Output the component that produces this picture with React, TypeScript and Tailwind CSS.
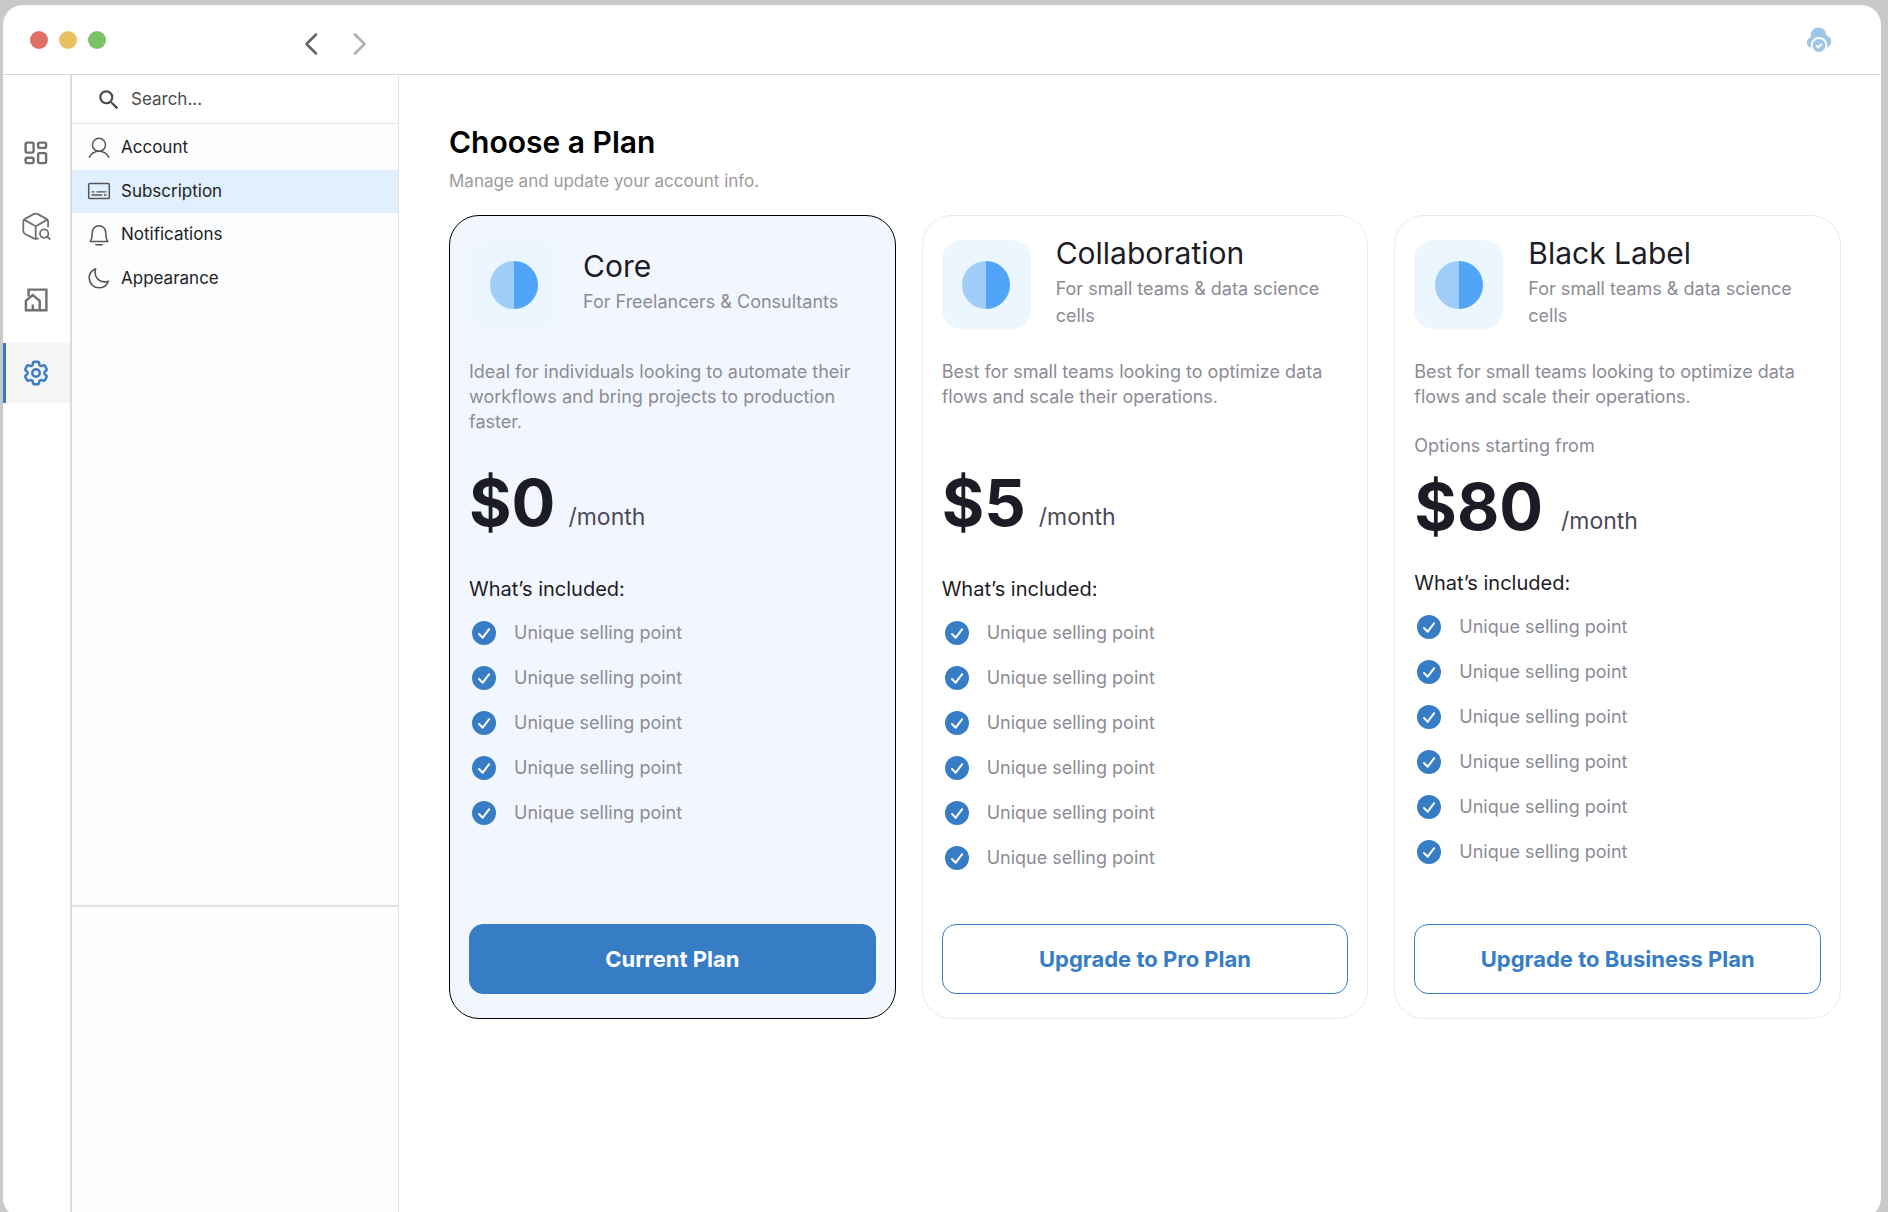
import { useState, type ReactNode } from "react";
import { MdSearch } from "react-icons/md";
import { HiOutlineCog6Tooth } from "react-icons/hi2";

type Plan = {
  name: string;
  audience: string;
  description: string;
  note?: string;
  price: string;
  features: number;
  action: string;
  current?: boolean;
};

const plans: Plan[] = [
  {
    name: "Core",
    audience: "For Freelancers & Consultants",
    description:
      "Ideal for individuals looking to automate their workflows and bring projects to production faster.",
    price: "$0",
    features: 5,
    action: "Current Plan",
    current: true,
  },
  {
    name: "Collaboration",
    audience: "For small teams & data science cells",
    description: "Best for small teams looking to optimize data flows and scale their operations.",
    price: "$5",
    features: 6,
    action: "Upgrade to Pro Plan",
  },
  {
    name: "Black Label",
    audience: "For small teams & data science cells",
    description: "Best for small teams looking to optimize data flows and scale their operations.",
    note: "Options starting from",
    price: "$80",
    features: 6,
    action: "Upgrade to Business Plan",
  },
];

function Chevron({ flip }: { flip?: boolean }) {
  return (
    <svg width="16" height="24" viewBox="0 0 16 24" fill="none" stroke="currentColor" strokeWidth="2.6" strokeLinecap="round" strokeLinejoin="round" aria-hidden="true">
      <path d={flip ? "M3 2.5 12.5 12 3 21.5" : "M13 2.5 3.5 12 13 21.5"} />
    </svg>
  );
}

function CloudCheck() {
  return (
    <svg width="26" height="26" viewBox="0 0 26 26" aria-hidden="true">
      <g fill="#9cc5e8">
        <circle cx="12.5" cy="8.5" r="8" />
        <circle cx="19" cy="14.5" r="6.3" />
        <circle cx="6" cy="15.5" r="5.2" />
      </g>
      <circle cx="13" cy="18.5" r="8.4" fill="#fff" />
      <circle cx="13" cy="18.5" r="6.5" fill="#9cc5e8" />
      <path d="m10.2 18.4 2.1 2.1 3.6-3.6" fill="none" stroke="#fff" strokeWidth="1.8" />
    </svg>
  );
}

function DashboardIcon() {
  return (
    <svg width="28" height="28" viewBox="0 0 28 28" fill="none" stroke="currentColor" strokeWidth="2.4" aria-hidden="true">
      <rect x="3.6" y="3.6" width="8" height="10" rx="1.6" />
      <rect x="16.1" y="3.6" width="8" height="5.3" rx="1.6" />
      <rect x="3.6" y="18.8" width="8" height="5.3" rx="1.6" />
      <rect x="16.1" y="14.1" width="8" height="10" rx="1.6" />
    </svg>
  );
}

function BoxSearchIcon() {
  return (
    <svg width="30" height="30" viewBox="0 0 30 30" fill="none" stroke="currentColor" strokeWidth="1.8" strokeLinecap="round" strokeLinejoin="round" aria-hidden="true">
      <path d="M17 27.3 14.7 28 12.8 27.4 4 23Q2.3 22 2.3 20V10.6Q2.3 8.8 4 7.9L12.6 3.1Q14.7 2 16.8 3.1L25.4 7.9Q27.1 8.8 27.1 10.6V15.4" />
      <path d="m3 8.6 11.7 6.6L26.4 8.6M14.7 15.2V28" />
      <circle cx="23.2" cy="22.6" r="4.2" />
      <path d="m26.2 25.6 2.6 2.4" />
    </svg>
  );
}

function HomeIcon() {
  return (
    <svg width="28" height="28" viewBox="0 0 28 28" fill="none" stroke="currentColor" strokeWidth="2.4" aria-hidden="true">
      <path d="M6.6 10.5V3.6h17.8v20.6H17.6" />
      <path d="M3.9 24.2V14.8l6.9-5.7 6.9 5.7v9.4z" />
      <path d="M10.8 24v-5.5" />
    </svg>
  );
}

function AccountIcon() {
  return (
    <svg width="24" height="24" viewBox="0 0 24 24" fill="none" stroke="currentColor" strokeWidth="1.5" strokeLinecap="round" aria-hidden="true">
      <circle cx="12" cy="8.8" r="6.5" />
      <path d="M2.3 21.2C4.4 17.4 7.8 15.3 12 15.3s7.6 2.1 9.7 5.9" />
    </svg>
  );
}

function SubscriptionIcon() {
  return (
    <svg width="24" height="24" viewBox="0 0 24 24" fill="none" stroke="currentColor" strokeWidth="1.5" aria-hidden="true">
      <rect x="1.7" y="4.6" width="20.6" height="15" rx="1.2" />
      <path d="M4.6 12.8h3M9.5 12.8h10M4.6 16h10.5M16.8 16h2.7" strokeWidth="1.3" />
    </svg>
  );
}

function BellIcon() {
  return (
    <svg width="24" height="24" viewBox="0 0 24 24" fill="none" stroke="currentColor" strokeWidth="1.5" strokeLinejoin="round" strokeLinecap="round" aria-hidden="true">
      <path d="M3.2 18.6q2-2.8 2-8.6C5.2 5.8 8 2.8 12 2.8s6.8 3 6.8 7.2q0 5.8 2 8.6z" />
      <path d="M8.8 21.8h6.4" />
    </svg>
  );
}

function MoonIcon() {
  return (
    <svg width="24" height="24" viewBox="0 0 24 24" fill="none" stroke="currentColor" strokeWidth="1.6" strokeLinejoin="round" aria-hidden="true">
      <path d="M8.7 2.8C4.8 4.3 2.2 7.8 2.2 12c0 5.5 4.3 9.8 9.7 9.8 4.2 0 7.9-2.6 9.5-6.6-1.3.5-2.5.7-3.9.7-5.300 0-9.500-4.200-9.500-9.400 0-1.300.2-2.500.7-3.700z" />
    </svg>
  );
}

function PlanLogo() {
  return (
    <svg width="48" height="48" viewBox="0 0 48 48" aria-hidden="true">
      <path d="M24 0a24 24 0 0 0 0 48z" fill="#9fccf8" />
      <path d="M24 0a24 24 0 0 1 0 48z" fill="#50a5f8" />
    </svg>
  );
}

function CheckBadge() {
  return (
    <svg width="24" height="24" viewBox="0 0 24 24" className="shrink-0" aria-hidden="true">
      <circle cx="12" cy="12" r="12" fill="#367dc6" />
      <path d="m7 13 3.7 3.7L17.2 8.2" fill="none" stroke="#fff" strokeWidth="2" strokeLinecap="round" strokeLinejoin="round" />
    </svg>
  );
}

const railItems: { label: string; icon: ReactNode }[] = [
  { label: "Dashboard", icon: <DashboardIcon /> },
  { label: "Explore", icon: <BoxSearchIcon /> },
  { label: "Home", icon: <HomeIcon /> },
  { label: "Settings", icon: <HiOutlineCog6Tooth size={30} strokeWidth={2} /> },
];

const menuItems: { label: string; icon: ReactNode }[] = [
  { label: "Account", icon: <AccountIcon /> },
  { label: "Subscription", icon: <SubscriptionIcon /> },
  { label: "Notifications", icon: <BellIcon /> },
  { label: "Appearance", icon: <MoonIcon /> },
];

function PlanCard({ plan }: { plan: Plan }) {
  return (
    <article
      className={`flex flex-col rounded-[30px] border px-[19px] py-6 ${
        plan.current ? "border-black bg-[#f2f7ff]" : "border-[#eaeaea] bg-white"
      }`}
    >
      <header className="flex h-[89px] items-center gap-[25px]">
        <div className="flex size-[89px] shrink-0 items-center justify-center rounded-[20px] bg-[#ecf6ff]">
          <PlanLogo />
        </div>
        <div className="flex flex-col gap-2 pb-0.5">
          <h2 className="text-[30px] leading-7 text-[#1d1b26]">{plan.name}</h2>
          <p className="text-[18px] leading-[27px] text-[#8c8b95]">{plan.audience}</p>
        </div>
      </header>

      <p className={`mt-[30px] text-[18px] leading-[25px] text-[#8c8b95] ${plan.note ? "" : "min-h-[75px]"}`}>
        {plan.description}
      </p>
      {plan.note && <p className="mt-6 text-[18px] leading-[25px] text-[#8c8b95]">{plan.note}</p>}

      <p className={`flex items-end ${plan.note ? "mt-4 gap-[18px]" : "mt-9 gap-[13px]"}`}>
        <span className="text-[65px] leading-[66px] font-bold text-[#1d1b26]">{plan.price}</span>
        <span className="text-[23px] leading-[38px] text-[#4b4958]">/month</span>
      </p>

      <h3 className={`text-[20px] leading-[30px] text-[#1d1b26] ${plan.note ? "mt-7" : "mt-[38px]"}`}>
        What’s included:
      </h3>
      <ul className="mt-1.5 pl-[3px]">
        {Array.from({ length: plan.features }, (_, i) => (
          <li key={i} className="flex h-[45px] items-center gap-[18px] text-[18px] text-[#8c8b95]">
            <CheckBadge />
            Unique selling point
          </li>
        ))}
      </ul>

      <div className="mt-auto pt-11">
        <button
          type="button"
          className={`h-[70px] w-full rounded-[14px] border text-[22px] font-bold ${
            plan.current ? "border-[#367dc6] bg-[#367dc6] text-white" : "border-[#367dc6] bg-white text-[#367dc6]"
          }`}
        >
          {plan.action}
        </button>
      </div>
    </article>
  );
}

export default function App() {
  const [query, setQuery] = useState("");

  return (
    <div className="h-screen overflow-hidden bg-[#c9c9c9] pt-[5px] pr-[7px] pl-[3px] font-['Inter',sans-serif]">
      <div className="flex h-[calc(100%+6px)] flex-col overflow-hidden rounded-[20px] bg-white">
        <header className="flex h-[70px] shrink-0 items-center border-b border-[#d9d9d9] pr-[49px] pl-[27px]">
          <div className="flex w-[273px] gap-[11px]">
            <span className="size-[18px] rounded-full bg-[#de7164]" />
            <span className="size-[18px] rounded-full bg-[#ebc063]" />
            <span className="size-[18px] rounded-full bg-[#7bc364]" />
          </div>
          <nav className="flex gap-[33px] pt-2" aria-label="History">
            <button type="button" aria-label="Back" className="text-[#666]">
              <Chevron />
            </button>
            <button type="button" aria-label="Forward" className="text-[#b0b0b0]">
              <Chevron flip />
            </button>
          </nav>
          <button type="button" aria-label="Sync status" className="ml-auto">
            <CloudCheck />
          </button>
        </header>

        <div className="flex min-h-0 flex-1">
          <nav className="w-[69px] shrink-0 border-r-2 border-[#dcdcdc] pt-12" aria-label="Main">
            <div className="flex h-[280px] flex-col justify-between">
              {railItems.map((item) => {
                const active = item.label === "Settings";
                return (
                  <button
                    key={item.label}
                    type="button"
                    aria-label={item.label}
                    className={`flex h-[60px] items-center justify-center border-l-[3px] pr-[5px] ${
                      active ? "border-[#367dc6] bg-[#f5f5f5] text-[#367dc6]" : "border-transparent text-[#707070]"
                    }`}
                  >
                    {item.icon}
                  </button>
                );
              })}
            </div>
          </nav>

          <aside className="flex w-[327px] shrink-0 flex-col border-r border-[#e2e4e6] bg-[#fbfdff]">
            <label className="flex h-[49px] items-center gap-[9px] border-b border-[#e2e4e6] bg-white pt-0.5 pl-6 text-[#4a4a4a]">
              <MdSearch size={26} />
              <input
                type="text"
                value={query}
                onChange={(e) => setQuery(e.target.value)}
                placeholder="Search..."
                aria-label="Search"
                className="min-w-0 flex-1 bg-transparent text-[17px] outline-none placeholder:text-[#4a4a4a]"
              />
            </label>
            <nav className="mt-0.5 flex h-[174px] flex-col" aria-label="Settings">
              {menuItems.map((item) => (
                <a
                  key={item.label}
                  href="#"
                  className={`flex flex-1 items-center gap-2.5 pl-[15px] text-[17px] text-[#222] ${
                    item.label === "Subscription" ? "bg-[#e1f0fe]" : ""
                  }`}
                >
                  <span className="text-[#555]">{item.icon}</span>
                  {item.label}
                </a>
              ))}
            </nav>
            <div className="mt-auto h-[313px] border-t-2 border-[#e0e2e4]" />
          </aside>

          <main className="min-w-0 flex-1 pt-[49px] pr-10 pl-[50px]">
            <h1 className="text-[30px] leading-9 font-semibold text-black">Choose a Plan</h1>
            <p className="mt-[9px] text-[17px] leading-6 text-[#9b9b9b]">Manage and update your account info.</p>
            <div className="mt-[22px] grid grid-cols-3 gap-[26px]">
              {plans.map((plan) => (
                <PlanCard key={plan.name} plan={plan} />
              ))}
            </div>
          </main>
        </div>
      </div>
    </div>
  );
}
